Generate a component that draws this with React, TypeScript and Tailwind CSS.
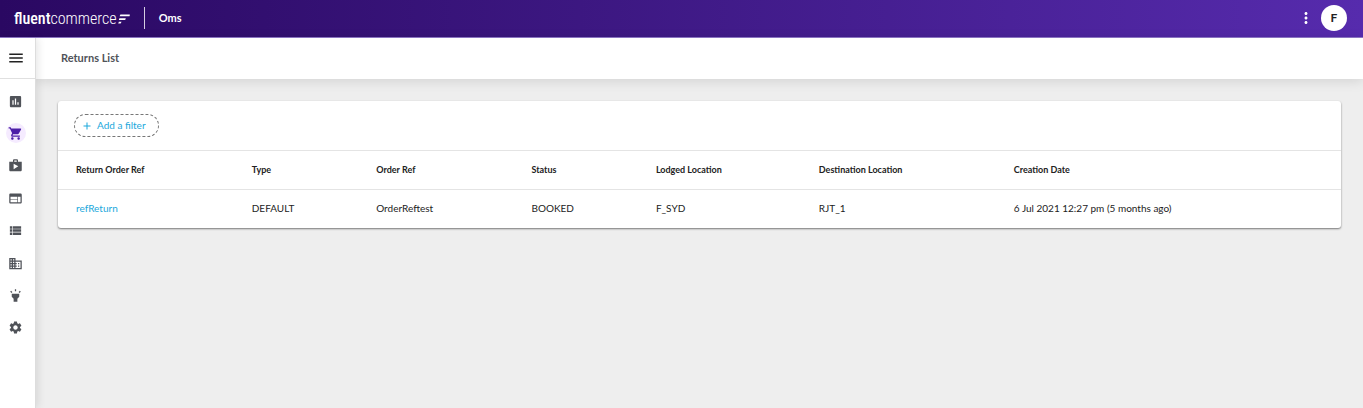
import {
  MdAdd,
  MdBusiness,
  MdHighlight,
  MdInsertChart,
  MdMenu,
  MdMoreVert,
  MdSettings,
  MdShop,
  MdShoppingCart,
  MdViewList,
  MdWeb,
} from "react-icons/md";

const navItems = [
  { label: "Insights", icon: MdInsertChart },
  { label: "Orders", icon: MdShoppingCart, active: true },
  { label: "Products", icon: MdShop },
  { label: "Pages", icon: MdWeb },
  { label: "Lists", icon: MdViewList },
  { label: "Locations", icon: MdBusiness },
  { label: "Highlights", icon: MdHighlight },
  { label: "Settings", icon: MdSettings },
];

const columns = [
  { label: "Return Order Ref", width: "w-[13.7%]" },
  { label: "Type", width: "w-[9.7%]" },
  { label: "Order Ref", width: "w-[12.1%]" },
  { label: "Status", width: "w-[9.7%]" },
  { label: "Lodged Location", width: "w-[12.7%]" },
  { label: "Destination Location", width: "w-[15.2%]" },
  { label: "Creation Date", width: "w-[26.9%]" },
];

const returns = [
  {
    ref: "refReturn",
    cells: ["DEFAULT", "OrderReftest", "BOOKED", "F_SYD", "RJT_1", "6 Jul 2021 12:27 pm (5 months ago)"],
  },
];

function Logo() {
  return (
    <a href="#" className="flex items-center gap-px pt-0.5 text-white">
      <span className="font-['Roboto_Condensed','Roboto',sans-serif] text-[16px] leading-5">
        <span className="font-medium">fluent</span>
        <span className="font-light">commerce</span>
      </span>
      <svg width="12" height="11" viewBox="0 0 12 11" fill="currentColor" aria-hidden="true">
        <path d="M2.4 0.6H11.6Q12 0.6 11.8 1.2L11.5 2.3H1.6zM1.4 4.2H7.8L7.2 5.9H0.8zM0.9 7.8H3.6L2.6 9.5H0.2z" />
      </svg>
    </a>
  );
}

function Header() {
  return (
    <header className="flex h-[38px] items-center border-b border-[#8f78c8] bg-linear-to-r from-[#2a0862] to-[#562bad] pr-4 pb-px pl-3.5 text-white">
      <Logo />
      <div className="ml-3.5 h-[22px] w-px bg-white/80" />
      <span className="ml-3.5 text-[11px] font-bold">Oms</span>
      <button type="button" aria-label="More" className="ml-auto">
        <MdMoreVert size={18} />
      </button>
      <button
        type="button"
        aria-label="Account"
        className="ml-1.5 h-[26px] w-[26px] rounded-full bg-white text-xs font-bold text-[#222]"
      >
        F
      </button>
    </header>
  );
}

function Sidebar() {
  return (
    <aside className="z-10 w-9 shrink-0 border-r border-[#ddd] bg-white shadow-[2px_0_8px_rgba(0,0,0,0.1)]">
      <button
        type="button"
        aria-label="Menu"
        className="flex h-[41px] w-full items-center justify-center border-b border-[#e0e0e0] pr-1 text-[#222]"
      >
        <MdMenu size={18} />
      </button>
      <nav className="flex h-[259px] flex-col items-center justify-between pt-3 pr-1">
        {navItems.map(({ label, icon: Icon, active }) => (
          <a
            key={label}
            href="#"
            aria-label={label}
            className={
              active
                ? "flex h-5 w-5 items-center justify-center rounded-full bg-[#f5ebff] text-[#4c1fa8]"
                : "flex h-5 w-5 items-center justify-center text-[#505359]"
            }
          >
            <Icon size={15} />
          </a>
        ))}
      </nav>
    </aside>
  );
}

function ReturnsTable() {
  return (
    <table className="w-full table-fixed text-left text-[#222]">
      <thead>
        <tr className="h-[39px] border-y border-[#e4e4e4]">
          {columns.map(({ label, width }) => (
            <th key={label} className={`${width} pl-[18px] text-[9px] font-bold`}>
              {label}
            </th>
          ))}
        </tr>
      </thead>
      <tbody>
        {returns.map((row) => (
          <tr key={row.ref} className="h-[38px] text-[10px]">
            <td className="pl-[18px]">
              <a href="#" className="text-[#1ba8dc]">
                {row.ref}
              </a>
            </td>
            {row.cells.map((cell) => (
              <td key={cell} className="pl-[18px]">
                {cell}
              </td>
            ))}
          </tr>
        ))}
      </tbody>
    </table>
  );
}

export default function App() {
  return (
    <div className="flex min-h-screen flex-col bg-[#eee] font-['Lato',sans-serif]">
      <Header />
      <div className="flex flex-1">
        <Sidebar />
        <div className="min-w-0 flex-1">
          <div className="flex h-[41px] items-center bg-white pl-[25px] shadow-[0_2px_12px_rgba(0,0,0,0.12)]">
            <h1 className="text-[11px] font-bold text-[#505359]">Returns List</h1>
          </div>
          <main className="pt-[22px] pr-[22px] pb-6 pl-[22px]">
            <section className="rounded-[3px] bg-white shadow-[0_1px_2px_rgba(0,0,0,0.5)]">
              <div className="px-4 py-[13px]">
                <button
                  type="button"
                  className="flex h-[23px] items-center gap-1 rounded-full border border-dashed border-[#777] pr-3 pl-1.5 text-[10px] text-[#1ba8dc]"
                >
                  <MdAdd size={12} />
                  Add a filter
                </button>
              </div>
              <ReturnsTable />
            </section>
          </main>
        </div>
      </div>
    </div>
  );
}
